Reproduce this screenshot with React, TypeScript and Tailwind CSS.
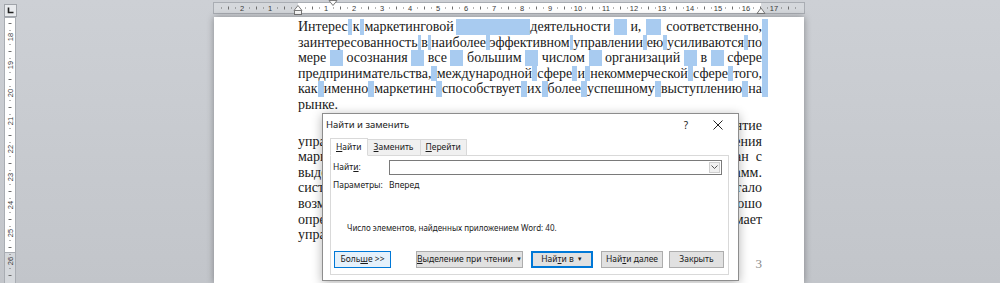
import React from "react";

const HL = "bg-[#a8cbf0]";

function Fill() {
  return <span className={"flex-1 " + HL} />;
}

function Mid() {
  return (
    <span className="flex flex-1 justify-center">
      <span className={"w-[13px] " + HL} />
    </span>
  );
}

function Gap() {
  return <span className="flex-1" />;
}

function W({ children }: { children: React.ReactNode }) {
  return <span className="whitespace-nowrap">{children}</span>;
}

function HRuler() {
  const zero = 86;
  const marks: React.ReactNode[] = [];
  for (let q = -12; q <= 71; q++) {
    const x = zero + q * 7;
    if (x < 3 || x > 591) continue;
    if (q % 4 === 0) {
      if (q !== 0)
        marks.push(
          <text key={q} x={x} y={10.8} textAnchor="middle" fontSize="7.5" fill="#3a3a3a" fontFamily="Liberation Sans, sans-serif">
            {Math.abs(q / 4)}
          </text>
        );
    } else if (q % 2 === 0) {
      marks.push(<line key={q} x1={x + 0.5} x2={x + 0.5} y1={6.5} y2={9.5} stroke="#6d6d6d" />);
    } else {
      marks.push(<rect key={q} x={x} y={7.5} width={1} height={1} fill="#6d6d6d" />);
    }
  }
  return (
    <svg width="593" height="16" className="overflow-visible">
      <rect x="1.5" y="2.5" width="591" height="11" fill="#d5d8dc" stroke="#a9adb3" />
      <rect x="86" y="3" width="463" height="10" fill="#ffffff" />
      {marks}
      <polygon points="117,0.5 125,0.5 121,5.5" fill="#fbfbfb" stroke="#7a7a7a" />
      <polygon points="82,10.5 90,10.5 86,5.5" fill="#fbfbfb" stroke="#7a7a7a" />
      <rect x="82.5" y="10.5" width="7" height="4" fill="#fbfbfb" stroke="#7a7a7a" />
      <polygon points="545,13.5 553,13.5 549,8" fill="#fbfbfb" stroke="#7a7a7a" />
    </svg>
  );
}

function VRuler() {
  const marks: React.ReactNode[] = [];
  for (let q = 66; q <= 108; q++) {
    const y = 20 + (q - 72) * 7;
    if (y < 2 || y > 262) continue;
    if (q % 4 === 0) {
      marks.push(
        <text key={q} x={7} y={y} transform={`rotate(-90 7 ${y})`} dy="2.6" textAnchor="middle" fontSize="7.5" fill="#3a3a3a" fontFamily="Liberation Sans, sans-serif">
          {q / 4}
        </text>
      );
    } else if (q % 2 === 0) {
      marks.push(<line key={q} x1={5.5} x2={8.5} y1={y + 0.5} y2={y + 0.5} stroke="#6d6d6d" />);
    } else {
      marks.push(<rect key={q} x={6.5} y={y} width={1} height={1} fill="#6d6d6d" />);
    }
  }
  return (
    <svg width="14" height="266">
      <rect x="1.5" y="0.5" width="11" height="266" fill="#ffffff" stroke="#a9adb3" />
      <rect x="2" y="235" width="10" height="31" fill="#d5d8dc" />
      <line x1="2" x2="12" y1="235.5" y2="235.5" stroke="#a9adb3" />
      {marks}
    </svg>
  );
}

function Btn({ children, kind, w }: { children: React.ReactNode; kind: "hot" | "def" | "norm"; w: string }) {
  const cls =
    kind === "hot"
      ? "border border-[#0078d7] bg-[#e5f1fb]"
      : kind === "def"
      ? "border-2 border-[#0078d7] bg-[#e1e1e1]"
      : "border border-[#adadad] bg-[#e1e1e1]";
  return <div className={"flex h-[17px] items-center justify-center " + w + " " + cls}>{children}</div>;
}

function Caret() {
  return <span className="ml-[3px] text-[6px]">▼</span>;
}

function FindDialog() {
  return (
    <div className="absolute left-[322px] top-[113px] flex h-[168px] w-[417px] flex-col border border-[#8d8d8d] bg-white font-['Noto_Sans',sans-serif] text-[8.5px] text-[#1b1b1b] shadow-[0_2px_10px_rgba(0,0,0,0.3)]">
      <div className="flex h-[22px] items-center">
        <span className="pl-[3px] text-[9.5px]">Найти и заменить</span>
        <span className="flex-1" />
        <span className="flex w-[32px] justify-center text-[10px]">?</span>
        <span className="mr-[4px] flex w-[32px] justify-center">
          <svg width="10" height="10">
            <line x1="0.5" y1="0.5" x2="9.5" y2="9.5" stroke="#222" />
            <line x1="9.5" y1="0.5" x2="0.5" y2="9.5" stroke="#222" />
          </svg>
        </span>
      </div>
      <div className="relative z-10 -mb-px ml-[7px] mt-[2px] flex h-[18px] items-end">
        <div className="flex h-[18px] items-center border border-b-white border-[#d9d9d9] bg-white px-[5px]">
          <span>
            <u>Н</u>айти
          </span>
        </div>
        <div className="flex h-[17px] items-center border border-l-0 border-[#d9d9d9] bg-[#f0f0f0] px-[6px]">
          <span>
            <u>З</u>аменить
          </span>
        </div>
        <div className="flex h-[17px] items-center border border-l-0 border-[#d9d9d9] bg-[#f0f0f0] px-[5px]">
          <span>
            <u>П</u>ерейти
          </span>
        </div>
      </div>
      <div className="ml-[7px] flex h-[120px] w-[399px] flex-col border border-[#d9d9d9] bg-white">
        <div className="mt-[4px] flex h-[15px] items-center">
          <span className="w-[58px] pl-[2px]">
            Найт<u>и</u>:
          </span>
          <div className="flex h-[15px] w-[333px] items-stretch justify-end border border-[#7a7a7a] bg-white p-px">
            <div className="flex w-[11px] items-center justify-center border border-[#cfcfcf] bg-[#f0f0f0]">
              <svg width="7" height="5">
                <polyline points="0.5,0.5 3.5,3.5 6.5,0.5" fill="none" stroke="#555" />
              </svg>
            </div>
          </div>
        </div>
        <div className="mt-[4px] flex h-[12px] items-center">
          <span className="w-[58px] pl-[2px]">Параметры:</span>
          <span>Вперед</span>
        </div>
        <div className="mt-[31px] flex h-[12px] items-center pl-[16px] text-[8px]">
          Число элементов, найденных приложением Word: 40.
        </div>
        <div className="ml-[3px] mt-[17px] flex items-center">
          <Btn kind="hot" w="w-[57px]">
            <span>
              Боль<u>ш</u>е &gt;&gt;
            </span>
          </Btn>
          <div className="w-[25px]" />
          <Btn kind="norm" w="w-[107px]">
            <span>
              <u>В</u>ыделение при чтении
            </span>
            <Caret />
          </Btn>
          <div className="w-[8px]" />
          <Btn kind="def" w="w-[62px]">
            <span>
              Най<u>т</u>и в
            </span>
            <Caret />
          </Btn>
          <div className="w-[8px]" />
          <Btn kind="norm" w="w-[62px]">
            <span>
              Най<u>т</u>и далее
            </span>
          </Btn>
          <div className="w-[6px]" />
          <Btn kind="norm" w="w-[55px]">
            <span>Закрыть</span>
          </Btn>
        </div>
      </div>
    </div>
  );
}

function Row({ children, tail }: { children: React.ReactNode; tail?: boolean }) {
  return (
    <div className="flex h-[15.6px] leading-[15.6px]">
      <div className="flex w-[464px] justify-between">{children}</div>
      {tail ? <span className={"w-[6px] " + HL} /> : null}
    </div>
  );
}

export default function App() {
  return (
    <div className="relative h-[283px] w-[1000px] overflow-hidden bg-linear-to-b from-[#cdd0d5] to-[#c2c5ca]">
      <div className="flex h-[17px]">
        <div className="ml-[4px] mt-[4px] flex h-[13px] w-[13px] items-center justify-center border border-[#a0a4aa] bg-[#e9ebee]">
          <svg width="7" height="7">
            <path d="M1.5 0.5 V5.5 H6.5" fill="none" stroke="#222" strokeWidth="1.6" />
          </svg>
        </div>
        <div className="ml-[195px]">
          <HRuler />
        </div>
      </div>
      <div className="flex">
        <div className="ml-[3px]">
          <VRuler />
        </div>
        <div className="ml-[197px] h-[266px] w-[590px] bg-white pl-[84px] pt-[2px] font-['Liberation_Serif',serif] text-[14px] text-[#1a1a1a] shadow-[0_0_7px_rgba(0,0,0,0.35)]">
          <Row tail>
            <W>Интерес</W>
            <span className="flex w-[5px] justify-center"><span className={"w-[4px] " + HL} /></span>
            <W>к</W>
            <span className="flex w-[5px] justify-center"><span className={"w-[4px] " + HL} /></span>
            <W>маркетинговой</W>
            <span className="flex w-[77px] justify-end"><span className={"w-[74px] " + HL} /></span>
            <W>деятельности</W>
            <span className="flex w-[20px] justify-center"><span className={"w-[13px] " + HL} /></span>
            <W>и,</W>
            <span className="flex w-[25px] justify-center"><span className={"w-[15px] " + HL} /></span>
            <W>соответственно,</W>
          </Row>
          <Row tail>
            <W>заинтересованность</W><Fill /><W>в</W><Fill /><W>наиболее</W><Fill /><W>эффективном</W><Fill />
            <W>управлении</W><Fill /><W>ею</W><Fill /><W>усиливаются</W><Fill /><W>по</W>
          </Row>
          <Row tail>
            <W>мере</W><Mid /><W>осознания</W><Mid /><W>все</W><Mid /><W>большим</W><Mid /><W>числом</W><Mid />
            <W>организаций</W><Mid /><W>в</W><Mid /><W>сфере</W>
          </Row>
          <Row tail>
            <W>предпринимательства,</W><Fill /><W>международной</W><Fill /><W>сфере</W><Fill /><W>и</W><Fill />
            <W>некоммерческой</W><Fill /><W>сфере</W><Fill /><W>того,</W>
          </Row>
          <Row tail>
            <W>как</W><Fill /><W>именно</W><Fill /><W>маркетинг</W><Fill /><W>способствует</W><Fill /><W>их</W><Fill />
            <W>более</W><Fill /><W>успешному</W><Fill /><W>выступлению</W><Fill /><W>на</W>
          </Row>
          <div className="h-[15.6px] leading-[15.6px]">рынке.</div>

          <div className="mt-[5.5px]">
            <Row>
              <span className="w-[35px]" />
              <W>Сегодня</W><Gap /><W>маркетинг</W><Gap /><W>выступает</W><Gap /><W>как</W><Gap /><W>ключевое</W><Gap /><W>понятие</W>
            </Row>
            <Row>
              <W>управления</W><Gap /><W>фирмой,</W><Gap /><W>включающее</W><Gap /><W>в</W><Gap /><W>себя</W><Gap /><W>комплекс</W><Gap /><W>мер</W><Gap /><W>продвижения</W>
            </Row>
            <Row>
              <W>маркетинга,</W><Gap /><W>который</W><Gap /><W>реализуется</W><Gap /><W>через</W><Gap /><W>маркетинговый</W><Gap /><W>план&nbsp;&nbsp;с</W>
            </Row>
            <Row>
              <W>выделением</W><Gap /><W>целевых</W><Gap /><W>сегментов</W><Gap /><W>рынка</W><Gap /><W>и</W><Gap /><W>разработкой</W><Gap /><W>программ.</W>
            </Row>
            <Row>
              <W>системы</W><Gap /><W>управления</W><Gap /><W>маркетингом</W><Gap /><W>на</W><Gap /><W>предприятии,</W><Gap /><W>что</W><Gap /><W>стало</W>
            </Row>
            <Row>
              <W>возможным</W><Gap /><W>благодаря</W><Gap /><W>тому,</W><Gap /><W>что</W><Gap /><W>предприятия</W><Gap /><W>стали</W><Gap /><W>хорошо</W>
            </Row>
            <Row>
              <W>определять</W><Gap /><W>своих</W><Gap /><W>потребителей</W><Gap /><W>и</W><Gap /><W>то,</W><Gap /><W>как</W><Gap /><W>клиент</W><Gap /><W>понимает</W>
            </Row>
            <div className="h-[15.6px] leading-[15.6px]">управление маркетингом.</div>
          </div>

          <div className="mt-[13px] w-[464px] text-right text-[13px] leading-[15px] text-[#8a8a8a]">3</div>
        </div>
      </div>
      <FindDialog />
    </div>
  );
}
